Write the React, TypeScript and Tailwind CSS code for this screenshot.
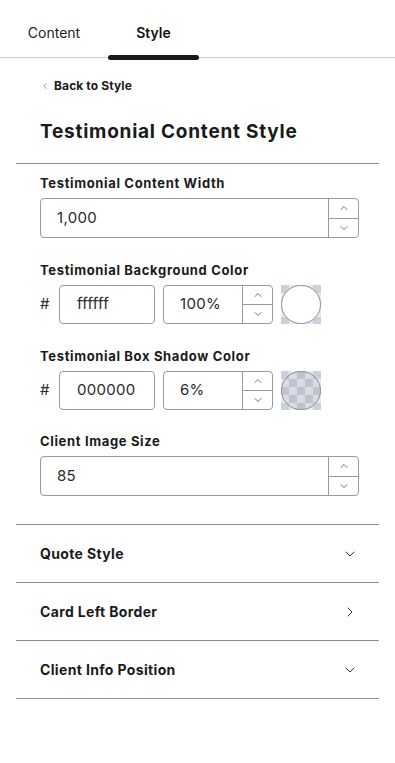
import { ChevronDown, ChevronRight, ChevronUp, ChevronLeft } from "lucide-react";

const font = { fontFamily: "Inter, 'Noto Sans', sans-serif" };

function Spinner() {
  return (
    <div className="flex flex-col w-[30px] border-l border-[#9a9a9a]">
      <button className="flex-1 flex items-center justify-center border-b border-[#9a9a9a]">
        <ChevronUp className="w-3 h-3 text-[#444]" strokeWidth={1.5} />
      </button>
      <button className="flex-1 flex items-center justify-center">
        <ChevronDown className="w-3 h-3 text-[#444]" strokeWidth={1.5} />
      </button>
    </div>
  );
}

function NumberField({ value }: { value: string }) {
  return (
    <div className="flex h-[40px] w-[319px] rounded-[4px] border border-[#9a9a9a] overflow-hidden">
      <div className="flex-1 flex items-center pl-4 text-[15px] tracking-[0.02em] text-[#2a2a2a]">{value}</div>
      <Spinner />
    </div>
  );
}

function Checker({ overlay }: { overlay: string }) {
  const cells = Array.from({ length: 25 }, (_, i) => i);
  return (
    <div className="relative w-[40px] h-[39px] overflow-hidden">
      <div className="grid grid-cols-5 w-[40px] h-[40px]">
        {cells.map((i) => (
          <div
            key={i}
            className={(Math.floor(i / 5) + (i % 5)) % 2 === 0 ? "bg-[#c9d1dc]" : "bg-[#e7eaee]"}
          />
        ))}
      </div>
      <div className={`absolute inset-0 rounded-full border border-[#8f8f8f] ${overlay}`} />
    </div>
  );
}

function ColorRow({ hex, pct, overlay }: { hex: string; pct: string; overlay: string }) {
  return (
    <div className="flex items-center">
      <span className="w-[19px] text-[15px] text-[#2a2a2a]">#</span>
      <div className="w-[96px] h-[39px] rounded-[4px] border border-[#9a9a9a] flex items-center pl-[17px] text-[15px] tracking-[0.02em] text-[#2a2a2a]">
        {hex}
      </div>
      <div className="ml-[8px] flex w-[110px] h-[39px] rounded-[4px] border border-[#9a9a9a] overflow-hidden">
        <div className="flex-1 flex items-center pl-4 text-[15px] tracking-[0.02em] text-[#2a2a2a]">{pct}</div>
        <Spinner />
      </div>
      <div className="ml-[8px]">
        <Checker overlay={overlay} />
      </div>
    </div>
  );
}

function Section({ title, open }: { title: string; open?: boolean }) {
  return (
    <div className="flex items-center justify-between h-[58px] pl-6 pr-[21px] border-b border-[#8c8c8c]">
      <span className="text-[14px] font-bold tracking-[0.025em] text-[#1a1a1a]">{title}</span>
      {open ? (
        <ChevronRight className="w-4 h-4 text-[#333]" strokeWidth={1.5} />
      ) : (
        <ChevronDown className="w-4 h-4 text-[#333]" strokeWidth={1.5} />
      )}
    </div>
  );
}

export default function App() {
  return (
    <div className="w-[395px] h-[763px] bg-white text-[#1a1a1a]" style={font}>
      {/* Tabs */}
      <div className="flex h-[58px] border-b border-[#cfcfcf]">
        <div className="w-[108px] flex justify-center pt-[23px] text-[14px] leading-[20px] text-[#222]">Content</div>
        <div className="relative w-[91px] flex justify-center pt-[23px] text-[14px] leading-[20px] font-semibold text-[#111]">
          Style
          <div className="absolute left-0 right-0 bottom-[-3px] h-[5px] rounded-full bg-[#1a1a1a]" />
        </div>
      </div>

      <div className="px-4">
        <div className="pl-6 pt-[19px] flex items-center gap-[4px] text-[12px] font-bold tracking-[0.01em]">
          <ChevronLeft className="w-[10px] h-[10px] text-[#888]" strokeWidth={2} />
          <span>Back to Style</span>
        </div>
        <h2 className="pl-6 mt-[25px] text-[19px] font-bold leading-[24px] tracking-[0.04em]">
          Testimonial Content Style
        </h2>

        <div className="mt-[19px] border-t border-[#8c8c8c] pl-6 pt-[11px] pb-[28px]">
          <div className="text-[13px] font-bold leading-[16px] tracking-[0.05em]">Testimonial Content Width</div>
          <div className="mt-[7px]">
            <NumberField value="1,000" />
          </div>

          <div className="mt-[24px] text-[13px] font-bold leading-[16px] tracking-[0.05em]">
            Testimonial Background Color
          </div>
          <div className="mt-[7px]">
            <ColorRow hex="ffffff" pct="100%" overlay="bg-white" />
          </div>

          <div className="mt-[24px] text-[13px] font-bold leading-[16px] tracking-[0.05em]">
            Testimonial Box Shadow Color
          </div>
          <div className="mt-[7px]">
            <ColorRow hex="000000" pct="6%" overlay="bg-black/[0.06]" />
          </div>

          <div className="mt-[23px] text-[13px] font-bold leading-[16px] tracking-[0.05em]">Client Image Size</div>
          <div className="mt-[7px]">
            <NumberField value="85" />
          </div>
        </div>

        <div className="border-t border-[#8c8c8c]">
          <Section title="Quote Style" />
          <Section title="Card Left Border" open />
          <Section title="Client Info Position" />
        </div>
      </div>
    </div>
  );
}
